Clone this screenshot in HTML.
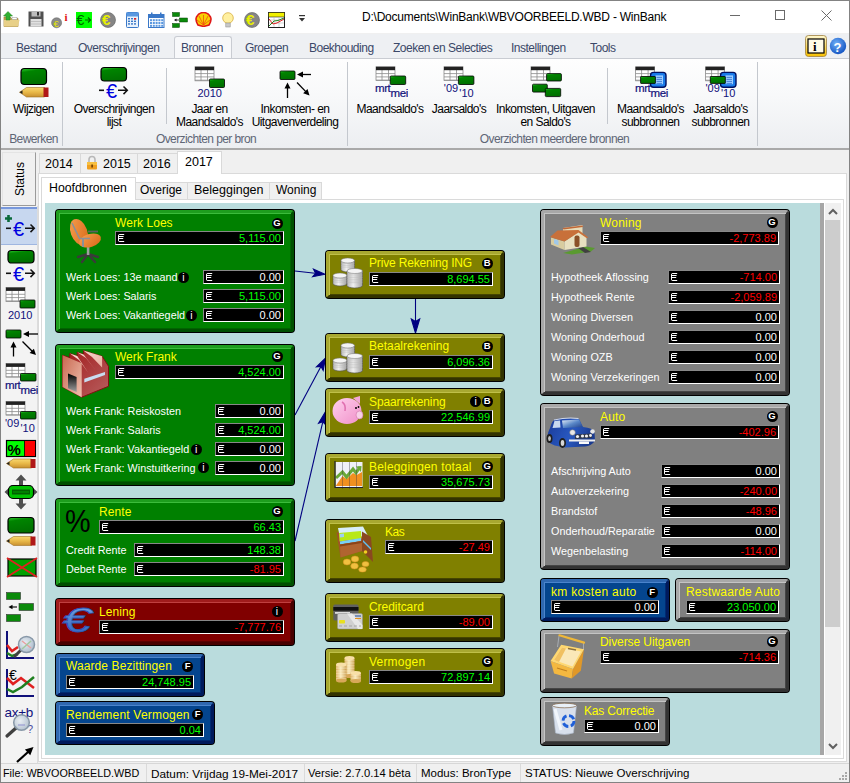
<!DOCTYPE html>
<html><head><meta charset="utf-8"><style>
*{box-sizing:border-box;margin:0;padding:0}
html,body{width:850px;height:783px;overflow:hidden;background:#f0f0f0;font-family:"Liberation Sans",sans-serif}
.a{position:absolute}
#frame{position:absolute;left:0;top:0;width:850px;height:783px;border:1px solid #838383}
.bx{position:absolute;background:#000;border-radius:4px;padding:1px}
.bi{width:100%;height:100%;border-style:solid;border-width:3px;border-radius:3px;position:relative}
.g .bi{background:#008000;border-color:#1e9e1e #005000 #005000 #1e9e1e;box-shadow:inset 1px 1px 0 #3cbc3c,inset -1px -1px 0 #006400}
.o .bi{background:#808000;border-color:#a8a830 #333300 #333300 #a8a830;box-shadow:inset 1px 1px 0 #c0c048,inset -1px -1px 0 #454500}
.y .bi{background:#808080;border-color:#a8a8a8 #333 #333 #a8a8a8;box-shadow:inset 1px 1px 0 #c4c4c4,inset -1px -1px 0 #454545}
.b .bi{background:#04458e;border-color:#2f68b0 #001a5c #001a5c #2f68b0;box-shadow:inset 1px 1px 0 #4a84cc,inset -1px -1px 0 #002a72}
.r .bi{background:#800000;border-color:#a01c1c #480000 #480000 #a01c1c;box-shadow:inset 1px 1px 0 #c04040,inset -1px -1px 0 #5a0000}
.tt{position:absolute;font-size:12px;line-height:14px;color:#ffff00;white-space:nowrap}
.lb{position:absolute;font-size:10.8px;line-height:13px;color:#fff;white-space:nowrap}
.y .lb{color:#ececec;letter-spacing:0.1px}
.vf{position:absolute;height:14px;background:#000;border-style:solid;border-width:1px;border-color:#888 #fff #fff #888;font-size:11px;line-height:12px;color:#fff;white-space:nowrap}
.vf .eu{position:absolute;left:0;top:0}
.vf b{font-weight:normal;position:absolute;right:2px;top:0}
.gr{color:#00ff00!important}.rd{color:#ff0000!important}
.bd{position:absolute;width:11px;height:11px;border-radius:50%;background:#000;color:#fff;font-size:9.5px;font-weight:bold;text-align:center;line-height:10.6px;font-family:"Liberation Sans",sans-serif}
.rt{position:absolute;top:41.3px;font-size:12px;letter-spacing:-0.5px;color:#3b4868;white-space:nowrap}
.rl{position:absolute;font-size:12px;letter-spacing:-0.55px;line-height:13px;color:#000;text-align:center;white-space:nowrap}
.grp{position:absolute;top:132px;font-size:12px;letter-spacing:-0.6px;color:#5e6676;white-space:nowrap}
.st{position:absolute;top:767px;font-size:11.5px;color:#000;white-space:nowrap}
.sd{position:absolute;top:764px;width:1px;height:18px;background:#dadada}
</style></head><body>
<svg width="0" height="0" style="position:absolute"><symbol id="eur" viewBox="0 0 10 12"><path d="M3.2 2.5H8.2M2.5 3.2V8.8M3.2 9.5H8.2M2.8 4.5H7.6M2.8 6.5H7.2" stroke="#fff" stroke-width="1" fill="none"/><path d="M3.5 2.5Q2.5 2.5 2.5 3.5M2.5 8.5Q2.5 9.5 3.5 9.5" stroke="#fff" stroke-width="1" fill="none"/></symbol></svg>
<div class="a" style="left:0;top:0;width:850px;height:33px;background:#fff"></div>
<div class="a" style="left:362px;top:9.8px;font-size:12px;letter-spacing:-0.23px;color:#000;white-space:nowrap">D:\Documents\WinBank\WBVOORBEELD.WBD - WinBank</div>
<div class="a" style="left:730px;top:15px;width:10px;height:1px;background:#6a6a6a"></div>
<div class="a" style="left:775px;top:10px;width:10px;height:10px;border:1px solid #6a6a6a"></div>
<svg class="a" style="left:820.5px;top:10px" width="11" height="11"><path d="M0.5 0.5L10.5 10.5M10.5 0.5L0.5 10.5" stroke="#6a6a6a" stroke-width="1"/></svg>
<div class="a" style="left:0;top:34px;width:850px;height:24px;background:#eef0f3"></div>
<div class="a" style="left:174px;top:36px;width:58px;height:23px;background:#f7f8fa;border:1px solid #c9ccd2;border-bottom:none;border-radius:3px 3px 0 0"></div>
<div class="rt" style="left:16px">Bestand</div>
<div class="rt" style="left:78px">Overschrijvingen</div>
<div class="rt" style="left:181px">Bronnen</div>
<div class="rt" style="left:245px">Groepen</div>
<div class="rt" style="left:309px">Boekhouding</div>
<div class="rt" style="left:393px">Zoeken en Selecties</div>
<div class="rt" style="left:511px">Instellingen</div>
<div class="rt" style="left:590px">Tools</div>
<div class="a" style="left:0;top:58px;width:850px;height:91px;background:linear-gradient(#fefefe,#f8f9fa 40%,#eceef1);border-top:1px solid #c9ccd2"></div>
<div class="a" style="left:0;top:148px;width:850px;height:2px;background:#a9a9a9"></div>
<div class="a" style="left:62px;top:62px;width:1px;height:84px;background:#c4c8ce"></div>
<div class="a" style="left:347px;top:62px;width:1px;height:84px;background:#c4c8ce"></div>
<div class="a" style="left:757px;top:62px;width:1px;height:84px;background:#c4c8ce"></div>
<div class="a" style="left:166px;top:68px;width:1px;height:56px;background:#c4c8ce"></div>
<div class="a" style="left:607px;top:68px;width:1px;height:56px;background:#c4c8ce"></div>
<div class="rl" style="left:-66.5px;width:200px;top:103px">Wijzigen</div>
<div class="rl" style="left:14px;width:200px;top:103px">Overschrijvingen</div>
<div class="rl" style="left:14px;width:200px;top:116px">lijst</div>
<div class="rl" style="left:109.5px;width:200px;top:103px">Jaar en</div>
<div class="rl" style="left:109.5px;width:200px;top:116px">Maandsaldo's</div>
<div class="rl" style="left:195px;width:200px;top:103px">Inkomsten- en</div>
<div class="rl" style="left:195px;width:200px;top:116px">Uitgavenverdeling</div>
<div class="rl" style="left:290px;width:200px;top:103px">Maandsaldo's</div>
<div class="rl" style="left:359px;width:200px;top:103px">Jaarsaldo's</div>
<div class="rl" style="left:445.5px;width:200px;top:103px">Inkomsten, Uitgaven</div>
<div class="rl" style="left:445.5px;width:200px;top:116px">en Saldo's</div>
<div class="rl" style="left:550.5px;width:200px;top:103px">Maandsaldo's</div>
<div class="rl" style="left:550.5px;width:200px;top:116px">subbronnen</div>
<div class="rl" style="left:620.5px;width:200px;top:103px">Jaarsaldo's</div>
<div class="rl" style="left:620.5px;width:200px;top:116px">subbronnen</div>
<div class="grp" style="left:-66.5px;width:200px;text-align:center">Bewerken</div>
<div class="grp" style="left:106px;width:200px;text-align:center">Overzichten per bron</div>
<div class="grp" style="left:454.5px;width:200px;text-align:center">Overzichten meerdere bronnen</div>
<div class="a" style="left:2px;top:152px;width:34px;height:54px;background:#f0f0f0;border:1px solid #e4e4e4;border-right:1px solid #9a9a9a;border-bottom:1px solid #9a9a9a"></div>
<div class="a" style="left:0px;top:172px;width:40px;text-align:center;font-size:12px;color:#000;transform:rotate(-90deg);white-space:nowrap">Status</div>
<div class="a" style="left:1px;top:206px;width:37px;height:557px;background:#f3f3f3;border-right:1px solid #dcdcdc"></div>
<div class="a" style="left:1px;top:207px;width:36px;height:38px;background:#c7d7ef;border-top:2px solid #7898dc;border-bottom:1px solid #9fb6e0"></div>
<div class="a" style="left:38px;top:173px;width:809px;height:589px;background:#fff;border:1px solid #dadada"></div>
<div class="a" style="left:39px;top:153px;width:42px;height:21px;background:#f0f0f0;border:1px solid #d9d9d9"></div>
<div class="a" style="left:80px;top:153px;width:58px;height:21px;background:#f0f0f0;border:1px solid #d9d9d9"></div>
<div class="a" style="left:137px;top:153px;width:42px;height:21px;background:#f0f0f0;border:1px solid #d9d9d9"></div>
<div class="a" style="left:177px;top:151px;width:45px;height:23px;background:#fff;border:1px solid #d9d9d9;border-bottom:none"></div>
<div class="a" style="left:45px;top:157px;font-size:12.5px;color:#000;white-space:nowrap">2014</div>
<div class="a" style="left:103px;top:157px;font-size:12.5px;color:#000;white-space:nowrap">2015</div>
<div class="a" style="left:143px;top:157px;font-size:12.5px;color:#000;white-space:nowrap">2016</div>
<div class="a" style="left:185px;top:155px;font-size:12.5px;color:#000;white-space:nowrap">2017</div>
<svg class="a" style="left:86px;top:155px" width="12" height="15"><path d="M3 7V4.5a3 3 0 0 1 6 0V7" fill="none" stroke="#b8b8b8" stroke-width="1.6"/><rect x="1" y="7" width="10" height="7.5" rx="1" fill="#f0a020"/><rect x="1" y="7" width="10" height="3" fill="#f8c040"/><rect x="5.4" y="9.5" width="1.4" height="3" fill="#5a3000"/></svg>
<div class="a" style="left:41px;top:199px;width:803px;height:560px;background:#fff;border:1px solid #dadada"></div>
<div class="a" style="left:135px;top:182px;width:187px;height:18px;background:#f0f0f0;border:1px solid #d9d9d9"></div>
<div class="a" style="left:187px;top:182px;width:1px;height:18px;background:#d9d9d9"></div>
<div class="a" style="left:269px;top:182px;width:1px;height:18px;background:#d9d9d9"></div>
<div class="a" style="left:41px;top:177px;width:95px;height:23px;background:#fff;border:1px solid #d9d9d9;border-bottom:none"></div>
<div class="a" style="left:49px;top:181px;font-size:12.3px;color:#000;white-space:nowrap">Hoofdbronnen</div>
<div class="a" style="left:140px;top:183px;font-size:12px;color:#000;white-space:nowrap">Overige</div>
<div class="a" style="left:194px;top:183px;font-size:12.5px;color:#000;white-space:nowrap">Beleggingen</div>
<div class="a" style="left:276px;top:183px;font-size:12px;color:#000;white-space:nowrap">Woning</div>
<div class="a" style="left:45px;top:203px;width:775px;height:552px;background:#badcdd"></div>
<div class="a" style="left:820px;top:203px;width:4px;height:552px;background:#a6a6a6"></div>
<div class="a" style="left:825px;top:203px;width:16px;height:552px;background:#f0f0f0"></div>
<div class="a" style="left:825px;top:220px;width:15px;height:407px;background:#cdcdcd"></div>
<svg class="a" style="left:827px;top:207px" width="12" height="9"><path d="M2 7L6 3L10 7" fill="none" stroke="#606060" stroke-width="2"/></svg>
<svg class="a" style="left:827px;top:742px" width="12" height="9"><path d="M2 2L6 6L10 2" fill="none" stroke="#606060" stroke-width="2"/></svg>
<div class="a" style="left:0;top:763px;width:850px;height:20px;background:#f0f0f0;border-top:1px solid #d7d7d7"></div>
<div class="st" style="left:3px;font-size:10.8px">File: WBVOORBEELD.WBD</div>
<div class="st" style="left:151px;font-size:11.8px">Datum: Vrijdag 19-Mei-2017</div>
<div class="st" style="left:308px;font-size:11.2px">Versie: 2.7.0.14 bèta</div>
<div class="st" style="left:421px;font-size:11.5px">Modus: BronType</div>
<div class="st" style="left:525px;font-size:11.5px">STATUS: Nieuwe Overschrijving</div>
<div class="sd" style="left:146px"></div>
<div class="sd" style="left:304px"></div>
<div class="sd" style="left:416px"></div>
<div class="sd" style="left:520px"></div>
<svg class="a" style="left:0;top:0" width="850" height="783"><g stroke="#000080" stroke-width="1.1" fill="#000080"><line x1="295" y1="271" x2="315.06" y2="273.21"/><path d="M325.00 274.30L312.66 276.77L315.56 273.26L313.49 269.21Z"/><line x1="415.5" y1="299" x2="415.50" y2="321.00"/><path d="M415.50 333.00L411.30 319.00L415.50 321.50L419.70 319.00Z"/><line x1="295" y1="415" x2="320.78" y2="366.82"/><path d="M325.50 358.00L323.19 370.37L321.02 366.38L316.49 366.79Z"/><line x1="295" y1="541" x2="322.73" y2="422.24"/><path d="M325.00 412.50L325.97 425.05L322.84 421.75L318.57 423.32Z"/></g></svg>
<div class="bx g" style="left:55px;top:209px;width:240px;height:124px"><div class="bi"></div></div>
<div class="tt" style="left:115px;top:215.8px;letter-spacing:0.06px">Werk Loes</div>
<div class="bd" style="left:271.5px;top:217.5px;">G</div>
<div class="vf" style="left:115px;top:231px;width:169px;height:14px"><svg class="eu" width="10" height="12"><use href="#eur"/></svg><b class="gr">5,115.00</b></div>
<div class="lb" style="left:66px;top:270.6px;">Werk Loes: 13e maand</div>
<div class="vf" style="left:203px;top:270px;width:81px;height:14px"><svg class="eu" width="10" height="12"><use href="#eur"/></svg><b>0.00</b></div>
<div class="lb" style="left:66px;top:289.6px;">Werk Loes: Salaris</div>
<div class="vf" style="left:203px;top:289px;width:81px;height:14px"><svg class="eu" width="10" height="12"><use href="#eur"/></svg><b class="gr">5,115.00</b></div>
<div class="lb" style="left:66px;top:308.6px;">Werk Loes: Vakantiegeld</div>
<div class="vf" style="left:203px;top:308px;width:81px;height:14px"><svg class="eu" width="10" height="12"><use href="#eur"/></svg><b>0.00</b></div>
<div class="bd" style="left:178.0px;top:271.5px;font-weight:normal;font-size:10.5px;line-height:10.5px;">i</div>
<div class="bd" style="left:186.0px;top:309.5px;font-weight:normal;font-size:10.5px;line-height:10.5px;">i</div>
<div class="bx g" style="left:55px;top:344px;width:240px;height:142px"><div class="bi"></div></div>
<div class="tt" style="left:115px;top:349.8px;letter-spacing:0px">Werk Frank</div>
<div class="bd" style="left:271.5px;top:351.2px;">G</div>
<div class="vf" style="left:115px;top:365px;width:169px;height:14px"><svg class="eu" width="10" height="12"><use href="#eur"/></svg><b class="gr">4,524.00</b></div>
<div class="lb" style="left:66px;top:404.6px;">Werk Frank: Reiskosten</div>
<div class="vf" style="left:215px;top:404px;width:69px;height:14px"><svg class="eu" width="10" height="12"><use href="#eur"/></svg><b>0.00</b></div>
<div class="lb" style="left:66px;top:423.6px;">Werk Frank: Salaris</div>
<div class="vf" style="left:215px;top:423px;width:69px;height:14px"><svg class="eu" width="10" height="12"><use href="#eur"/></svg><b class="gr">4,524.00</b></div>
<div class="lb" style="left:66px;top:442.6px;">Werk Frank: Vakantiegeld</div>
<div class="vf" style="left:215px;top:442px;width:69px;height:14px"><svg class="eu" width="10" height="12"><use href="#eur"/></svg><b>0.00</b></div>
<div class="lb" style="left:66px;top:461.6px;">Werk Frank: Winstuitkering</div>
<div class="vf" style="left:215px;top:461px;width:69px;height:14px"><svg class="eu" width="10" height="12"><use href="#eur"/></svg><b>0.00</b></div>
<div class="bd" style="left:190.7px;top:443.5px;font-weight:normal;font-size:10.5px;line-height:10.5px;">i</div>
<div class="bd" style="left:198.0px;top:462.2px;font-weight:normal;font-size:10.5px;line-height:10.5px;">i</div>
<div class="bx g" style="left:55px;top:498px;width:240px;height:89px"><div class="bi"></div></div>
<div class="tt" style="left:99px;top:504.8px;letter-spacing:0.1px">Rente</div>
<div class="bd" style="left:271.5px;top:505.9px;">G</div>
<div class="vf" style="left:99px;top:520px;width:185px;height:14px"><svg class="eu" width="10" height="12"><use href="#eur"/></svg><b class="gr">66.43</b></div>
<div class="lb" style="left:66px;top:543.6px;">Credit Rente</div>
<div class="vf" style="left:134px;top:543px;width:150px;height:14px"><svg class="eu" width="10" height="12"><use href="#eur"/></svg><b class="gr">148.38</b></div>
<div class="lb" style="left:66px;top:562.6px;">Debet Rente</div>
<div class="vf" style="left:134px;top:562px;width:150px;height:14px"><svg class="eu" width="10" height="12"><use href="#eur"/></svg><b class="rd">-81.95</b></div>
<div class="bx r" style="left:55px;top:598px;width:240px;height:48px"><div class="bi"></div></div>
<div class="tt" style="left:99px;top:604.8px;letter-spacing:0.1px">Lening</div>
<div class="bd" style="left:271.5px;top:606.2px;font-weight:normal;font-size:10.5px;line-height:10.5px;">i</div>
<div class="vf" style="left:99px;top:620px;width:185px;height:14px"><svg class="eu" width="10" height="12"><use href="#eur"/></svg><b class="rd">-7,777.76</b></div>
<div class="bx b" style="left:55px;top:653px;width:150px;height:44px"><div class="bi"></div></div>
<div class="tt" style="left:66px;top:658.8px;letter-spacing:0.09px">Waarde Bezittingen</div>
<div class="bd" style="left:182.2px;top:661.1px;">F</div>
<div class="vf" style="left:66px;top:675px;width:128px;height:14px"><svg class="eu" width="10" height="12"><use href="#eur"/></svg><b class="gr">24,748.95</b></div>
<div class="bx b" style="left:55px;top:701px;width:160px;height:44px"><div class="bi"></div></div>
<div class="tt" style="left:66px;top:707.8px;letter-spacing:0.2px">Rendement Vermogen</div>
<div class="bd" style="left:192.1px;top:708.7px;">F</div>
<div class="vf" style="left:66px;top:723px;width:138px;height:14px"><svg class="eu" width="10" height="12"><use href="#eur"/></svg><b class="gr">0.04</b></div>
<div class="bx o" style="left:325px;top:250px;width:180px;height:49px"><div class="bi"></div></div>
<div class="tt" style="left:369px;top:255.8px;letter-spacing:-0.17px">Prive Rekening ING</div>
<div class="bd" style="left:481.8px;top:258.2px;">B</div>
<div class="vf" style="left:369px;top:272px;width:124px;height:14px"><svg class="eu" width="10" height="12"><use href="#eur"/></svg><b class="gr">8,694.55</b></div>
<div class="bx o" style="left:325px;top:333px;width:180px;height:49px"><div class="bi"></div></div>
<div class="tt" style="left:369px;top:338.8px;letter-spacing:0px">Betaalrekening</div>
<div class="bd" style="left:481.8px;top:341.1px;">B</div>
<div class="vf" style="left:369px;top:355px;width:124px;height:14px"><svg class="eu" width="10" height="12"><use href="#eur"/></svg><b class="gr">6,096.36</b></div>
<div class="bx o" style="left:325px;top:388px;width:180px;height:49px"><div class="bi"></div></div>
<div class="tt" style="left:369px;top:394.8px;letter-spacing:-0.12px">Spaarrekening</div>
<div class="bd" style="left:481.8px;top:396.4px;">B</div>
<div class="vf" style="left:369px;top:410px;width:124px;height:14px"><svg class="eu" width="10" height="12"><use href="#eur"/></svg><b class="gr">22,546.99</b></div>
<div class="bx o" style="left:325px;top:453px;width:180px;height:49px"><div class="bi"></div></div>
<div class="tt" style="left:369px;top:459.8px;letter-spacing:0.18px">Beleggingen totaal</div>
<div class="bd" style="left:481.8px;top:461.3px;">G</div>
<div class="vf" style="left:369px;top:475px;width:124px;height:14px"><svg class="eu" width="10" height="12"><use href="#eur"/></svg><b class="gr">35,675.73</b></div>
<div class="bx o" style="left:325px;top:519px;width:180px;height:64px"><div class="bi"></div></div>
<div class="tt" style="left:385px;top:524.8px;letter-spacing:-0.5px">Kas</div>
<div class="vf" style="left:385px;top:540px;width:108px;height:14px"><svg class="eu" width="10" height="12"><use href="#eur"/></svg><b class="rd">-27.49</b></div>
<div class="bx o" style="left:325px;top:593px;width:180px;height:49px"><div class="bi"></div></div>
<div class="tt" style="left:369px;top:599.8px;letter-spacing:-0.06px">Creditcard</div>
<div class="vf" style="left:369px;top:615px;width:124px;height:14px"><svg class="eu" width="10" height="12"><use href="#eur"/></svg><b class="rd">-89.00</b></div>
<div class="bx o" style="left:325px;top:648px;width:180px;height:49px"><div class="bi"></div></div>
<div class="tt" style="left:369px;top:654.8px;letter-spacing:0.2px">Vermogen</div>
<div class="bd" style="left:481.8px;top:656.2px;">G</div>
<div class="vf" style="left:369px;top:670px;width:124px;height:14px"><svg class="eu" width="10" height="12"><use href="#eur"/></svg><b class="gr">72,897.14</b></div>
<div class="bd" style="left:470.1px;top:396.4px;font-weight:normal;font-size:10.5px;line-height:10.5px;">i</div>
<div class="bx y" style="left:540px;top:209px;width:250px;height:187px"><div class="bi"></div></div>
<div class="tt" style="left:600px;top:215.8px;letter-spacing:0.2px">Woning</div>
<div class="bd" style="left:766.5px;top:216.9px;">G</div>
<div class="vf" style="left:600px;top:231px;width:179px;height:14px"><svg class="eu" width="10" height="12"><use href="#eur"/></svg><b class="rd">-2,773.89</b></div>
<div class="lb" style="left:551px;top:270.6px;">Hypotheek Aflossing</div>
<div class="vf" style="left:668px;top:270px;width:112px;height:14px"><svg class="eu" width="10" height="12"><use href="#eur"/></svg><b class="rd">-714.00</b></div>
<div class="lb" style="left:551px;top:290.6px;">Hypotheek Rente</div>
<div class="vf" style="left:668px;top:290px;width:112px;height:14px"><svg class="eu" width="10" height="12"><use href="#eur"/></svg><b class="rd">-2,059.89</b></div>
<div class="lb" style="left:551px;top:310.6px;">Woning Diversen</div>
<div class="vf" style="left:668px;top:310px;width:112px;height:14px"><svg class="eu" width="10" height="12"><use href="#eur"/></svg><b>0.00</b></div>
<div class="lb" style="left:551px;top:330.6px;">Woning Onderhoud</div>
<div class="vf" style="left:668px;top:330px;width:112px;height:14px"><svg class="eu" width="10" height="12"><use href="#eur"/></svg><b>0.00</b></div>
<div class="lb" style="left:551px;top:350.6px;">Woning OZB</div>
<div class="vf" style="left:668px;top:350px;width:112px;height:14px"><svg class="eu" width="10" height="12"><use href="#eur"/></svg><b>0.00</b></div>
<div class="lb" style="left:551px;top:370.6px;">Woning Verzekeringen</div>
<div class="vf" style="left:668px;top:370px;width:112px;height:14px"><svg class="eu" width="10" height="12"><use href="#eur"/></svg><b>0.00</b></div>
<div class="bx y" style="left:540px;top:403px;width:250px;height:167px"><div class="bi"></div></div>
<div class="tt" style="left:600px;top:409.8px;letter-spacing:0.15px">Auto</div>
<div class="bd" style="left:766.5px;top:410.7px;">G</div>
<div class="vf" style="left:600px;top:425px;width:179px;height:14px"><svg class="eu" width="10" height="12"><use href="#eur"/></svg><b class="rd">-402.96</b></div>
<div class="lb" style="left:551px;top:464.6px;">Afschrijving Auto</div>
<div class="vf" style="left:661px;top:464px;width:119px;height:14px"><svg class="eu" width="10" height="12"><use href="#eur"/></svg><b>0.00</b></div>
<div class="lb" style="left:551px;top:484.6px;">Autoverzekering</div>
<div class="vf" style="left:661px;top:484px;width:119px;height:14px"><svg class="eu" width="10" height="12"><use href="#eur"/></svg><b class="rd">-240.00</b></div>
<div class="lb" style="left:551px;top:504.6px;">Brandstof</div>
<div class="vf" style="left:661px;top:504px;width:119px;height:14px"><svg class="eu" width="10" height="12"><use href="#eur"/></svg><b class="rd">-48.96</b></div>
<div class="lb" style="left:551px;top:524.6px;">Onderhoud/Reparatie</div>
<div class="vf" style="left:661px;top:524px;width:119px;height:14px"><svg class="eu" width="10" height="12"><use href="#eur"/></svg><b>0.00</b></div>
<div class="lb" style="left:551px;top:544.6px;">Wegenbelasting</div>
<div class="vf" style="left:661px;top:544px;width:119px;height:14px"><svg class="eu" width="10" height="12"><use href="#eur"/></svg><b class="rd">-114.00</b></div>
<div class="bx b" style="left:540px;top:578px;width:130px;height:44px"><div class="bi"></div></div>
<div class="tt" style="left:551px;top:584.8px;letter-spacing:0.3px">km kosten auto</div>
<div class="bd" style="left:646.7px;top:586.5px;">F</div>
<div class="vf" style="left:551px;top:600px;width:108px;height:14px"><svg class="eu" width="10" height="12"><use href="#eur"/></svg><b>0.00</b></div>
<div class="bx y" style="left:675px;top:578px;width:115px;height:44px"><div class="bi"></div></div>
<div class="tt" style="left:686px;top:584.8px;letter-spacing:0.19px">Restwaarde Auto</div>
<div class="vf" style="left:686px;top:600px;width:93px;height:14px"><svg class="eu" width="10" height="12"><use href="#eur"/></svg><b class="gr">23,050.00</b></div>
<div class="bx y" style="left:540px;top:629px;width:250px;height:64px"><div class="bi"></div></div>
<div class="tt" style="left:600px;top:634.8px;letter-spacing:-0.08px">Diverse Uitgaven</div>
<div class="bd" style="left:766.5px;top:636.3px;">G</div>
<div class="vf" style="left:600px;top:650px;width:179px;height:14px"><svg class="eu" width="10" height="12"><use href="#eur"/></svg><b class="rd">-714.36</b></div>
<div class="bx y" style="left:540px;top:697px;width:130px;height:49px"><div class="bi"></div></div>
<div class="tt" style="left:584px;top:703.8px;letter-spacing:-0.18px">Kas Correctie</div>
<div class="vf" style="left:584px;top:719px;width:75px;height:14px"><svg class="eu" width="10" height="12"><use href="#eur"/></svg><b>0.00</b></div>
<div class="a" style="left:845px;top:772px;width:2px;height:2px;background:#a8a8a8"></div>
<div class="a" style="left:842px;top:775px;width:2px;height:2px;background:#a8a8a8"></div>
<div class="a" style="left:845px;top:775px;width:2px;height:2px;background:#a8a8a8"></div>
<div class="a" style="left:839px;top:778px;width:2px;height:2px;background:#a8a8a8"></div>
<div class="a" style="left:842px;top:778px;width:2px;height:2px;background:#a8a8a8"></div>
<div class="a" style="left:845px;top:778px;width:2px;height:2px;background:#a8a8a8"></div>
<svg class="a" style="left:0;top:0" width="0" height="0"><defs>
<linearGradient id="gg" x1="0" y1="0" x2="0.25" y2="1"><stop offset="0" stop-color="#30d030"/><stop offset="0.25" stop-color="#008400"/><stop offset="1" stop-color="#007000"/></linearGradient>
<linearGradient id="pen" x1="0" y1="0" x2="0" y2="1"><stop offset="0" stop-color="#f8d870"/><stop offset="0.5" stop-color="#e8b848"/><stop offset="1" stop-color="#c89030"/></linearGradient>
<linearGradient id="orng" x1="0" y1="0" x2="1" y2="1"><stop offset="0" stop-color="#f8a050"/><stop offset="1" stop-color="#d86818"/></linearGradient>
<linearGradient id="silv" x1="0" y1="0" x2="1" y2="0"><stop offset="0" stop-color="#b8b8b8"/><stop offset="0.4" stop-color="#f0f0f0"/><stop offset="1" stop-color="#a0a0a0"/></linearGradient>
<linearGradient id="gold" x1="0" y1="0" x2="1" y2="0"><stop offset="0" stop-color="#d8a858"/><stop offset="0.45" stop-color="#fae8b8"/><stop offset="1" stop-color="#c89848"/></linearGradient>
<linearGradient id="eub" x1="0" y1="0" x2="0" y2="1"><stop offset="0" stop-color="#7fb0ea"/><stop offset="1" stop-color="#2858b8"/></linearGradient>
<linearGradient id="pink" x1="0" y1="0" x2="1" y2="1"><stop offset="0" stop-color="#ffd0ee"/><stop offset="1" stop-color="#f090c8"/></linearGradient>
<linearGradient id="fac" x1="0" y1="0" x2="1" y2="1"><stop offset="0" stop-color="#c86850"/><stop offset="1" stop-color="#f0c0b0"/></linearGradient>
<linearGradient id="bsk" x1="0" y1="0" x2="0" y2="1"><stop offset="0" stop-color="#ffe090"/><stop offset="1" stop-color="#f0a820"/></linearGradient>
</defs></svg>
<svg class="a" style="left:3px;top:11px;" width="18" height="17" viewBox="0 0 18 17"><path d="M1 6 H7 L8.5 7.5 H15 V15.5 H1 Z" fill="#c8a850" stroke="#a08030" stroke-width="0.7"/><path d="M1 9 H16.5 L15 15.5 H1 Z" fill="#e8d088"/><rect x="9" y="6.5" width="5" height="2" fill="#fff" stroke="#999" stroke-width="0.5"/><path d="M5 0.5 L9.5 5 H7 V9 H3 V5 H0.5 Z" fill="#30b030" stroke="#208020" stroke-width="0.5"/></svg>
<svg class="a" style="left:28px;top:11px;" width="16" height="16" viewBox="0 0 16 16"><path d="M0.5 0.5H15.5V15.5H0.5Z" fill="#505050"/><rect x="3.5" y="0.5" width="9" height="5" fill="#bdbdbd"/><rect x="9" y="1" width="2" height="3.5" fill="#333"/><rect x="2.5" y="8" width="11" height="7.5" fill="#e0e0e0"/><line x1="3" y1="10.5" x2="13" y2="10.5" stroke="#aaa" stroke-width="0.6"/><line x1="3" y1="13" x2="13" y2="13" stroke="#aaa" stroke-width="0.6"/></svg>
<svg class="a" style="left:51px;top:12px;" width="19" height="17" viewBox="0 0 19 17"><circle cx="5.6" cy="10.8" r="5" fill="#8a8a8a" stroke="#6a6a6a" stroke-width="0.6"/><text x="2.4" y="14.5" font-family="Liberation Sans" font-size="9.5" fill="#e8e800">€</text><text x="13.5" y="9" font-family="Liberation Serif" font-weight="bold" font-size="11" fill="#e01010">i</text></svg>
<svg class="a" style="left:76px;top:12px;" width="16" height="16" viewBox="0 0 16 16"><rect x="0" y="0" width="16" height="16" fill="#00ff00"/><text x="0.5" y="13.3" font-family="Liberation Sans" font-size="14" fill="#006000">€</text><path d="M9 8H14.5M12 5.5L14.5 8L12 10.5" fill="none" stroke="#006000" stroke-width="1.2"/></svg>
<svg class="a" style="left:100px;top:11.5px;" width="17" height="16" viewBox="0 0 17 16"><circle cx="8.0" cy="8.0" r="7.5" fill="#858585" stroke="#606060" stroke-width="0.6"/><text x="1.92" y="13.28" font-family="Liberation Sans" font-weight="bold" font-size="15.2" fill="#e8f000">€</text></svg>
<svg class="a" style="left:126px;top:12px;" width="13" height="16" viewBox="0 0 13 16"><rect x="0.5" y="0.5" width="12" height="15" rx="1" fill="#e8f2fc" stroke="#3a78c8" stroke-width="1"/><rect x="0.5" y="0.5" width="12" height="4" fill="#5a98e0"/><rect x="2" y="6.0" width="2" height="1.4" fill="#3a78c8"/><rect x="2" y="8.6" width="2" height="1.4" fill="#3a78c8"/><rect x="2" y="11.2" width="2" height="1.4" fill="#3a78c8"/><rect x="5" y="6.0" width="2" height="1.4" fill="#3a78c8"/><rect x="5" y="8.6" width="2" height="1.4" fill="#3a78c8"/><rect x="5" y="11.2" width="2" height="1.4" fill="#3a78c8"/><rect x="8" y="6.0" width="2" height="1.4" fill="#3a78c8"/><rect x="8" y="8.6" width="2" height="1.4" fill="#3a78c8"/><rect x="8" y="11.2" width="2" height="1.4" fill="#3a78c8"/><rect x="8" y="6" width="2.2" height="1.6" fill="#e02020"/></svg>
<svg class="a" style="left:148px;top:12px;" width="17" height="16" viewBox="0 0 17 16"><rect x="0.5" y="2.5" width="15.5" height="13" fill="#fff" stroke="#3a78c8" stroke-width="1"/><rect x="0.5" y="2.5" width="15.5" height="3.5" fill="#3a78c8"/><rect x="2.0" y="7.2" width="2" height="2" fill="#5a98e0"/><rect x="2.0" y="10.0" width="2" height="2" fill="#5a98e0"/><rect x="2.0" y="12.8" width="2" height="2" fill="#5a98e0"/><rect x="4.8" y="7.2" width="2" height="2" fill="#5a98e0"/><rect x="4.8" y="10.0" width="2" height="2" fill="#5a98e0"/><rect x="4.8" y="12.8" width="2" height="2" fill="#5a98e0"/><rect x="7.6" y="7.2" width="2" height="2" fill="#5a98e0"/><rect x="7.6" y="10.0" width="2" height="2" fill="#5a98e0"/><rect x="7.6" y="12.8" width="2" height="2" fill="#5a98e0"/><rect x="10.4" y="7.2" width="2" height="2" fill="#5a98e0"/><rect x="10.4" y="10.0" width="2" height="2" fill="#5a98e0"/><rect x="10.4" y="12.8" width="2" height="2" fill="#5a98e0"/><rect x="13.2" y="7.2" width="2" height="2" fill="#5a98e0"/><rect x="13.2" y="10.0" width="2" height="2" fill="#5a98e0"/><rect x="13.2" y="12.8" width="2" height="2" fill="#5a98e0"/><rect x="3" y="0.5" width="1.5" height="4" fill="#3a78c8"/><rect x="12" y="0.5" width="1.5" height="4" fill="#3a78c8"/></svg>
<svg class="a" style="left:172px;top:12px;" width="16" height="16" viewBox="0 0 16 16"><rect x="0.5" y="0.5" width="7" height="4" fill="#0a8a0a" stroke="#064006" stroke-width="0.5"/><rect x="7.5" y="6" width="8" height="4" fill="#0a8a0a" stroke="#064006" stroke-width="0.5"/><rect x="0.5" y="11.5" width="7" height="4" fill="#0a8a0a" stroke="#064006" stroke-width="0.5"/><line x1="7" y1="8" x2="3.50" y2="8.00" stroke="#111" stroke-width="0.8"/><path d="M2.00 8.00L4.50 6.40L4.50 9.60Z" fill="#111"/></svg>
<svg class="a" style="left:195px;top:12px;" width="17" height="15" viewBox="0 0 17 15"><path d="M8.5 14.5 L3 13 Q0 8 1.5 5 Q4 0.5 8.5 0.5 Q13 0.5 15.5 5 Q17 8 14 13 Z" fill="#f8d000" stroke="#e01818" stroke-width="1.6"/><path d="M8.5 13V3M8.5 13L4 4M8.5 13L13 4M8.5 13L2 8M8.5 13L15 8" stroke="#f05010" stroke-width="0.8"/></svg>
<svg class="a" style="left:222px;top:12px;" width="12" height="16" viewBox="0 0 12 16"><circle cx="6" cy="6" r="5.3" fill="#fff0a0" stroke="#d8b040" stroke-width="0.8"/><rect x="3.8" y="11" width="4.4" height="4" fill="#c8c8c8" stroke="#888" stroke-width="0.5"/></svg>
<svg class="a" style="left:244px;top:11.5px;" width="17" height="16" viewBox="0 0 17 16"><circle cx="8.0" cy="8.0" r="7.5" fill="#858585" stroke="#606060" stroke-width="0.6"/><text x="1.92" y="13.28" font-family="Liberation Sans" font-weight="bold" font-size="15.2" fill="#e8f000">€</text></svg>
<svg class="a" style="left:268px;top:12px;" width="17" height="16" viewBox="0 0 17 16"><rect x="0.5" y="0.5" width="16" height="15" fill="#fff" stroke="#222" stroke-width="1"/><rect x="0.5" y="0.5" width="16" height="4.5" fill="#f0f000" stroke="#222" stroke-width="0.6"/><path d="M1 8H16M1 11H16M6 5V15M11 5V15" stroke="#bbb" stroke-width="0.6"/><path d="M1 7L5 12L9 11L16 7" fill="none" stroke="#e02020" stroke-width="1"/><path d="M1 14L6 9L10 8.5L16 6" fill="none" stroke="#208020" stroke-width="1"/></svg>
<svg class="a" style="left:299px;top:15px;" width="7" height="8" viewBox="0 0 7 8"><rect x="0" y="0" width="6" height="1.2" fill="#333"/><path d="M0 3H6L3 6.5Z" fill="#333"/></svg>
<svg class="a" style="left:18px;top:66px;" width="32" height="32" viewBox="0 0 32 32"><rect x="3" y="2.5" width="25.5" height="16" rx="3.5" fill="url(#gg)" stroke="#000" stroke-width="1.2"/><path d="M1.5 26.25 L8.5 21.5 H26.5 V31.0 H8.5 Z" fill="url(#pen)" stroke="#a07020" stroke-width="0.6"/><path d="M1.5 26.25 L4.5 24.45 V28.05 Z" fill="#222"/><rect x="25.5" y="21.5" width="5" height="9.5" fill="#b01818"/></svg>
<svg class="a" style="left:98px;top:66px;" width="32" height="32" viewBox="0 0 32 32"><rect x="3" y="1.5" width="25.5" height="13.5" rx="3.5" fill="url(#gg)" stroke="#000" stroke-width="1.2"/><g transform="translate(1,16) scale(1.0)"><rect x="0" y="7.5" width="5" height="1.6" fill="#111"/><text x="7" y="15.5" font-family="Liberation Sans" font-size="20" fill="#0000e0">€</text><path d="M19 8.3H28M24.5 4.5L28.3 8.3L24.5 12.1" fill="none" stroke="#111" stroke-width="1.5"/></g></svg>
<svg class="a" style="left:194px;top:66px;" width="32" height="32" viewBox="0 0 32 32"><rect x="1" y="0.8" width="19" height="14" fill="#fff" stroke="#8a8a8a" stroke-width="0.8"/><line x1="1" y1="7.6" x2="20" y2="7.6" stroke="#8a8a8a" stroke-width="0.8"/><line x1="1" y1="10.9" x2="20" y2="10.9" stroke="#8a8a8a" stroke-width="0.8"/><line x1="1" y1="14.2" x2="20" y2="14.2" stroke="#8a8a8a" stroke-width="0.8"/><line x1="7" y1="3.8" x2="7" y2="14.8" stroke="#8a8a8a" stroke-width="0.8"/><line x1="13.5" y1="3.8" x2="13.5" y2="14.8" stroke="#8a8a8a" stroke-width="0.8"/><rect x="1" y="0.8" width="19" height="3.4" fill="#222"/><rect x="15.5" y="13" width="15" height="8.5" rx="1" fill="url(#gg)" stroke="#000" stroke-width="0.8"/><text x="3.5" y="30.5" font-family="Liberation Sans" font-size="11" fill="#10107a">2010</text></svg>
<svg class="a" style="left:278px;top:70px;" width="36" height="30" viewBox="0 0 36 30"><rect x="2" y="1" width="15" height="8.5" rx="1" fill="url(#gg)" stroke="#000" stroke-width="0.8"/><line x1="33" y1="4.5" x2="24.00" y2="4.50" stroke="#000" stroke-width="1.3"/><path d="M19.00 4.50L25.00 1.50L25.00 7.50Z" fill="#000"/><line x1="9.5" y1="28" x2="9.50" y2="17.50" stroke="#000" stroke-width="1.3"/><path d="M9.50 12.50L12.50 18.50L6.50 18.50Z" fill="#000"/><line x1="19" y1="12.5" x2="28.03" y2="21.90" stroke="#000" stroke-width="1.3"/><path d="M31.50 25.50L25.18 23.25L29.50 19.10Z" fill="#000"/></svg>
<svg class="a" style="left:374px;top:66px;" width="34" height="40" viewBox="0 0 34 40"><rect x="2" y="0.8" width="19" height="13.5" fill="#fff" stroke="#8a8a8a" stroke-width="0.8"/><line x1="2" y1="7.6" x2="21" y2="7.6" stroke="#8a8a8a" stroke-width="0.8"/><line x1="2" y1="10.9" x2="21" y2="10.9" stroke="#8a8a8a" stroke-width="0.8"/><line x1="2" y1="14.2" x2="21" y2="14.2" stroke="#8a8a8a" stroke-width="0.8"/><line x1="8" y1="3.8" x2="8" y2="14.3" stroke="#8a8a8a" stroke-width="0.8"/><line x1="14.5" y1="3.8" x2="14.5" y2="14.3" stroke="#8a8a8a" stroke-width="0.8"/><rect x="2" y="0.8" width="19" height="3.4" fill="#222"/><rect x="16.2" y="10" width="15.5" height="8.5" rx="1" fill="url(#gg)" stroke="#000" stroke-width="0.8"/><text x="1" y="26" font-family="Liberation Sans" font-size="11.5" fill="#10107a" stroke="#10107a" stroke-width="0.2" letter-spacing="-0.4">mrt</text><text x="16.5" y="31" font-family="Liberation Sans" font-size="11.5" fill="#10107a" stroke="#10107a" stroke-width="0.2" letter-spacing="-0.4">mei</text></svg>
<svg class="a" style="left:442px;top:66px;" width="34" height="40" viewBox="0 0 34 40"><rect x="2" y="0.8" width="19" height="13.5" fill="#fff" stroke="#8a8a8a" stroke-width="0.8"/><line x1="2" y1="7.6" x2="21" y2="7.6" stroke="#8a8a8a" stroke-width="0.8"/><line x1="2" y1="10.9" x2="21" y2="10.9" stroke="#8a8a8a" stroke-width="0.8"/><line x1="2" y1="14.2" x2="21" y2="14.2" stroke="#8a8a8a" stroke-width="0.8"/><line x1="8" y1="3.8" x2="8" y2="14.3" stroke="#8a8a8a" stroke-width="0.8"/><line x1="14.5" y1="3.8" x2="14.5" y2="14.3" stroke="#8a8a8a" stroke-width="0.8"/><rect x="2" y="0.8" width="19" height="3.4" fill="#222"/><rect x="16.4" y="10" width="15.5" height="8.5" rx="1" fill="url(#gg)" stroke="#000" stroke-width="0.8"/><text x="1.8" y="26" font-family="Liberation Sans" font-size="11" fill="#10107a">'09</text><text x="17.3" y="31" font-family="Liberation Sans" font-size="11" fill="#10107a">'10</text></svg>
<svg class="a" style="left:530px;top:66px;" width="34" height="32" viewBox="0 0 34 32"><rect x="1" y="0.8" width="19" height="13.5" fill="#fff" stroke="#8a8a8a" stroke-width="0.8"/><line x1="1" y1="7.6" x2="20" y2="7.6" stroke="#8a8a8a" stroke-width="0.8"/><line x1="1" y1="10.9" x2="20" y2="10.9" stroke="#8a8a8a" stroke-width="0.8"/><line x1="1" y1="14.2" x2="20" y2="14.2" stroke="#8a8a8a" stroke-width="0.8"/><line x1="7" y1="3.8" x2="7" y2="14.3" stroke="#8a8a8a" stroke-width="0.8"/><line x1="13.5" y1="3.8" x2="13.5" y2="14.3" stroke="#8a8a8a" stroke-width="0.8"/><rect x="1" y="0.8" width="19" height="3.4" fill="#222"/><rect x="16.6" y="7.6" width="14.8" height="7.4" rx="1" fill="url(#gg)" stroke="#000" stroke-width="0.8"/><rect x="2.5" y="18.2" width="14.8" height="7.9" rx="1" fill="url(#gg)" stroke="#000" stroke-width="0.8"/><rect x="15.3" y="22.4" width="15.4" height="8.2" rx="1" fill="url(#gg)" stroke="#000" stroke-width="0.8"/></svg>
<svg class="a" style="left:634px;top:66px;" width="36" height="40" viewBox="0 0 36 40"><rect x="1.6" y="0.8" width="19" height="14" fill="#fff" stroke="#8a8a8a" stroke-width="0.8"/><line x1="1.6" y1="7.6" x2="20.6" y2="7.6" stroke="#8a8a8a" stroke-width="0.8"/><line x1="1.6" y1="10.9" x2="20.6" y2="10.9" stroke="#8a8a8a" stroke-width="0.8"/><line x1="1.6" y1="14.2" x2="20.6" y2="14.2" stroke="#8a8a8a" stroke-width="0.8"/><line x1="7.6" y1="3.8" x2="7.6" y2="14.8" stroke="#8a8a8a" stroke-width="0.8"/><line x1="14.1" y1="3.8" x2="14.1" y2="14.8" stroke="#8a8a8a" stroke-width="0.8"/><rect x="1.6" y="0.8" width="19" height="3.4" fill="#222"/><rect x="16.5" y="6.4" width="15.5" height="14.8" rx="3" fill="#1a7ae8" stroke="#001060" stroke-width="1.4"/><rect x="21.5" y="9.4" width="7.5" height="8.8" fill="#9fd0ff"/><line x1="22.5" y1="11.4" x2="28.0" y2="11.4" stroke="#1a5ac8" stroke-width="0.7"/><line x1="22.5" y1="13.4" x2="28.0" y2="13.4" stroke="#1a5ac8" stroke-width="0.7"/><line x1="22.5" y1="15.4" x2="28.0" y2="15.4" stroke="#1a5ac8" stroke-width="0.7"/><line x1="22.5" y1="17.4" x2="28.0" y2="17.4" stroke="#1a5ac8" stroke-width="0.7"/><rect x="6.6" y="10.5" width="14.8" height="6.9" rx="0.5" fill="url(#gg)" stroke="#000" stroke-width="0.8"/><text x="1" y="26" font-family="Liberation Sans" font-size="11.5" fill="#10107a" stroke="#10107a" stroke-width="0.2" letter-spacing="-0.4">mrt</text><text x="16.5" y="31" font-family="Liberation Sans" font-size="11.5" fill="#10107a" stroke="#10107a" stroke-width="0.2" letter-spacing="-0.4">mei</text></svg>
<svg class="a" style="left:704px;top:66px;" width="36" height="40" viewBox="0 0 36 40"><rect x="1.6" y="0.8" width="19" height="14" fill="#fff" stroke="#8a8a8a" stroke-width="0.8"/><line x1="1.6" y1="7.6" x2="20.6" y2="7.6" stroke="#8a8a8a" stroke-width="0.8"/><line x1="1.6" y1="10.9" x2="20.6" y2="10.9" stroke="#8a8a8a" stroke-width="0.8"/><line x1="1.6" y1="14.2" x2="20.6" y2="14.2" stroke="#8a8a8a" stroke-width="0.8"/><line x1="7.6" y1="3.8" x2="7.6" y2="14.8" stroke="#8a8a8a" stroke-width="0.8"/><line x1="14.1" y1="3.8" x2="14.1" y2="14.8" stroke="#8a8a8a" stroke-width="0.8"/><rect x="1.6" y="0.8" width="19" height="3.4" fill="#222"/><rect x="16.5" y="6.4" width="15.5" height="14.8" rx="3" fill="#1a7ae8" stroke="#001060" stroke-width="1.4"/><rect x="21.5" y="9.4" width="7.5" height="8.8" fill="#9fd0ff"/><line x1="22.5" y1="11.4" x2="28.0" y2="11.4" stroke="#1a5ac8" stroke-width="0.7"/><line x1="22.5" y1="13.4" x2="28.0" y2="13.4" stroke="#1a5ac8" stroke-width="0.7"/><line x1="22.5" y1="15.4" x2="28.0" y2="15.4" stroke="#1a5ac8" stroke-width="0.7"/><line x1="22.5" y1="17.4" x2="28.0" y2="17.4" stroke="#1a5ac8" stroke-width="0.7"/><rect x="6.3" y="10.5" width="15" height="6.9" rx="0.5" fill="url(#gg)" stroke="#000" stroke-width="0.8"/><text x="1.5" y="26" font-family="Liberation Sans" font-size="11" fill="#10107a">'09</text><text x="17.0" y="31" font-family="Liberation Sans" font-size="11" fill="#10107a">'10</text></svg>
<svg class="a" style="left:805px;top:35px;" width="23" height="22" viewBox="0 0 23 22"><defs><linearGradient id="yb" x1="0" y1="0" x2="0" y2="1"><stop offset="0" stop-color="#fff8d0"/><stop offset="1" stop-color="#f8c000"/></linearGradient></defs><rect x="0.5" y="0.5" width="21" height="21" rx="3" fill="url(#yb)" stroke="#a08040" stroke-width="0.8"/><rect x="3" y="4" width="16" height="14" fill="#fffbe8" stroke="#000" stroke-width="1.2"/><text x="8" y="16" font-family="Liberation Serif" font-weight="bold" font-size="13" fill="#000">i</text></svg>
<svg class="a" style="left:829px;top:37px;" width="18" height="18" viewBox="0 0 18 18"><defs><radialGradient id="hb" cx="0.4" cy="0.35" r="0.7"><stop offset="0" stop-color="#70b0f8"/><stop offset="1" stop-color="#1050c0"/></radialGradient></defs><circle cx="9" cy="9" r="8.2" fill="url(#hb)"/><text x="4.6" y="14.5" font-family="Liberation Sans" font-weight="bold" font-size="13" fill="#fff">?</text></svg>
<svg class="a" style="left:4px;top:210px;" width="34" height="34" viewBox="0 0 34 34"><path d="M4.5 5V12M1 8.5H8" stroke="#0a6a3a" stroke-width="2.6"/><g transform="translate(2,10) scale(1.0)"><rect x="0" y="7.5" width="5" height="1.6" fill="#111"/><text x="7" y="15.5" font-family="Liberation Sans" font-size="20" fill="#0000e0">€</text><path d="M19 8.3H28M24.5 4.5L28.3 8.3L24.5 12.1" fill="none" stroke="#111" stroke-width="1.5"/></g></svg>
<svg class="a" style="left:4px;top:248px;" width="34" height="36" viewBox="0 0 34 36"><rect x="4" y="2.5" width="26" height="12.5" rx="3.5" fill="url(#gg)" stroke="#000" stroke-width="1.2"/><g transform="translate(2,17) scale(1.0)"><rect x="0" y="7.5" width="5" height="1.6" fill="#111"/><text x="7" y="15.5" font-family="Liberation Sans" font-size="20" fill="#0000e0">€</text><path d="M19 8.3H28M24.5 4.5L28.3 8.3L24.5 12.1" fill="none" stroke="#111" stroke-width="1.5"/></g></svg>
<svg class="a" style="left:4px;top:286px;" width="34" height="34" viewBox="0 0 34 34"><rect x="2" y="1.5" width="19" height="14" fill="#fff" stroke="#8a8a8a" stroke-width="0.8"/><line x1="2" y1="8.3" x2="21" y2="8.3" stroke="#8a8a8a" stroke-width="0.8"/><line x1="2" y1="11.6" x2="21" y2="11.6" stroke="#8a8a8a" stroke-width="0.8"/><line x1="2" y1="14.9" x2="21" y2="14.9" stroke="#8a8a8a" stroke-width="0.8"/><line x1="8" y1="4.5" x2="8" y2="15.5" stroke="#8a8a8a" stroke-width="0.8"/><line x1="14.5" y1="4.5" x2="14.5" y2="15.5" stroke="#8a8a8a" stroke-width="0.8"/><rect x="2" y="1.5" width="19" height="3.4" fill="#222"/><rect x="16" y="14" width="15" height="8" rx="0.8" fill="url(#gg)" stroke="#000" stroke-width="0.8"/><text x="4" y="32.5" font-family="Liberation Sans" font-size="11" fill="#10107a">2010</text></svg>
<svg class="a" style="left:4px;top:328px;" width="34" height="32" viewBox="0 0 34 32"><rect x="2" y="2" width="15" height="8" rx="0.8" fill="url(#gg)" stroke="#000" stroke-width="0.8"/><line x1="34" y1="6" x2="24.00" y2="6.00" stroke="#000" stroke-width="1.3"/><path d="M19.00 6.00L25.00 3.00L25.00 9.00Z" fill="#000"/><line x1="9.5" y1="28.5" x2="9.50" y2="18.50" stroke="#000" stroke-width="1.3"/><path d="M9.50 13.50L12.50 19.50L6.50 19.50Z" fill="#000"/><line x1="18.5" y1="13.5" x2="28.46" y2="23.46" stroke="#000" stroke-width="1.3"/><path d="M32.00 27.00L25.64 24.88L29.88 20.64Z" fill="#000"/></svg>
<svg class="a" style="left:4px;top:362px;" width="34" height="40" viewBox="0 0 34 40"><rect x="2" y="1.5" width="19" height="13.5" fill="#fff" stroke="#8a8a8a" stroke-width="0.8"/><line x1="2" y1="8.3" x2="21" y2="8.3" stroke="#8a8a8a" stroke-width="0.8"/><line x1="2" y1="11.6" x2="21" y2="11.6" stroke="#8a8a8a" stroke-width="0.8"/><line x1="2" y1="14.9" x2="21" y2="14.9" stroke="#8a8a8a" stroke-width="0.8"/><line x1="8" y1="4.5" x2="8" y2="15.0" stroke="#8a8a8a" stroke-width="0.8"/><line x1="14.5" y1="4.5" x2="14.5" y2="15.0" stroke="#8a8a8a" stroke-width="0.8"/><rect x="2" y="1.5" width="19" height="3.4" fill="#222"/><rect x="16.5" y="11.5" width="15.5" height="7.5" rx="0.8" fill="url(#gg)" stroke="#000" stroke-width="0.8"/><text x="1" y="26.5" font-family="Liberation Sans" font-size="11.5" fill="#10107a" stroke="#10107a" stroke-width="0.2" letter-spacing="-0.4">mrt</text><text x="16.5" y="31.5" font-family="Liberation Sans" font-size="11.5" fill="#10107a" stroke="#10107a" stroke-width="0.2" letter-spacing="-0.4">mei</text></svg>
<svg class="a" style="left:4px;top:400px;" width="34" height="40" viewBox="0 0 34 40"><rect x="2" y="1.5" width="19" height="13.5" fill="#fff" stroke="#8a8a8a" stroke-width="0.8"/><line x1="2" y1="8.3" x2="21" y2="8.3" stroke="#8a8a8a" stroke-width="0.8"/><line x1="2" y1="11.6" x2="21" y2="11.6" stroke="#8a8a8a" stroke-width="0.8"/><line x1="2" y1="14.9" x2="21" y2="14.9" stroke="#8a8a8a" stroke-width="0.8"/><line x1="8" y1="4.5" x2="8" y2="15.0" stroke="#8a8a8a" stroke-width="0.8"/><line x1="14.5" y1="4.5" x2="14.5" y2="15.0" stroke="#8a8a8a" stroke-width="0.8"/><rect x="2" y="1.5" width="19" height="3.4" fill="#222"/><rect x="16.5" y="11.5" width="15.5" height="7.5" rx="0.8" fill="url(#gg)" stroke="#000" stroke-width="0.8"/><text x="1" y="27" font-family="Liberation Sans" font-size="11" fill="#10107a">'09</text><text x="16.5" y="32" font-family="Liberation Sans" font-size="11" fill="#10107a">'10</text></svg>
<svg class="a" style="left:4px;top:438px;" width="34" height="32" viewBox="0 0 34 32"><rect x="2.5" y="2.5" width="29" height="16" fill="#00ff00" stroke="#000" stroke-width="1.2"/><rect x="20.5" y="3" width="10.5" height="15" fill="#ff0000"/><line x1="20.5" y1="2.5" x2="20.5" y2="18.5" stroke="#000" stroke-width="0.8"/><text x="3.5" y="16.5" font-family="Liberation Sans" font-weight="bold" font-size="15" fill="#000">%</text><path d="M2.5 25.5 L9.5 21 H27.5 V30 H9.5 Z" fill="url(#pen)" stroke="#a07020" stroke-width="0.6"/><path d="M2.5 25.5 L5.5 23.7 V27.3 Z" fill="#222"/><rect x="26.5" y="21" width="5" height="9" fill="#b01818"/></svg>
<svg class="a" style="left:4px;top:474px;" width="34" height="36" viewBox="0 0 34 36"><rect x="15" y="4" width="4" height="28" fill="#505050"/><rect x="3" y="16" width="28" height="4" fill="#505050"/><path d="M17 0.5L22.5 6.5H11.5Z M17 35.5L22.5 29.5H11.5Z M0.5 18L6.5 12.5V23.5Z M33.5 18L27.5 12.5V23.5Z" fill="#505050"/><rect x="4.5" y="11.5" width="25" height="13" rx="4.5" fill="#00c000" stroke="#000" stroke-width="1.2"/><rect x="8" y="15.5" width="18" height="5" fill="#006000"/><path d="M9 18H25" stroke="#00a000" stroke-width="1"/></svg>
<svg class="a" style="left:4px;top:514px;" width="34" height="34" viewBox="0 0 34 34"><rect x="4" y="3.5" width="26" height="15.5" rx="3.5" fill="url(#gg)" stroke="#000" stroke-width="1.2"/><path d="M2.5 27.0 L9.5 22.5 H27.5 V31.5 H9.5 Z" fill="url(#pen)" stroke="#a07020" stroke-width="0.6"/><path d="M2.5 27.0 L5.5 25.2 V28.8 Z" fill="#222"/><rect x="26.5" y="22.5" width="5" height="9" fill="#b01818"/></svg>
<svg class="a" style="left:4px;top:556px;" width="34" height="24" viewBox="0 0 34 24"><rect x="4" y="3" width="28" height="17" fill="#00a000" stroke="#000" stroke-width="1.2"/><path d="M3 2L33 21M33 2L3 21" stroke="#e02020" stroke-width="1.8"/></svg>
<svg class="a" style="left:4px;top:590px;" width="34" height="34" viewBox="0 0 34 34"><rect x="2.5" y="2.5" width="14" height="7" fill="#0a8a0a" stroke="#333" stroke-width="0.6"/><rect x="15" y="13.5" width="14.5" height="7" fill="#0a8a0a" stroke="#333" stroke-width="0.6"/><rect x="2.5" y="24.5" width="14" height="7" fill="#0a8a0a" stroke="#333" stroke-width="0.6"/><line x1="13" y1="17" x2="7.50" y2="17.00" stroke="#000" stroke-width="1.1"/><path d="M4.50 17.00L8.50 14.80L8.50 19.20Z" fill="#000"/></svg>
<svg class="a" style="left:0px;top:625px;" width="40" height="120" viewBox="0 0 40 120"><defs><radialGradient id="mg" cx="0.4" cy="0.4" r="0.7"><stop offset="0" stop-color="#e8eef4"/><stop offset="1" stop-color="#a8b8c8"/></radialGradient></defs><path d="M7 6V33H34" fill="none" stroke="#10107a" stroke-width="2"/><path d="M7 20L12 26L18 22" fill="none" stroke="#e02020" stroke-width="2.5"/><path d="M7 28L12 31L18 29" fill="none" stroke="#208020" stroke-width="2.5"/><path d="M21 25L14 32" stroke="#404040" stroke-width="3"/><circle cx="26.5" cy="19.5" r="8" fill="url(#mg)" stroke="#8898a8" stroke-width="1.5"/><path d="M22 16L31 23" stroke="#e8a0a0" stroke-width="1.5"/><path d="M22 24L31 16" stroke="#a0c8a0" stroke-width="1.5"/><text x="9" y="55" font-family="Liberation Sans" font-size="14" fill="#000">€</text><path d="M7 44V71H34" fill="none" stroke="#10107a" stroke-width="2"/><path d="M7 53L13 59L21 53L34 63" fill="none" stroke="#e02020" stroke-width="2.5"/><path d="M7 64L13 67L22 62L34 52" fill="none" stroke="#208020" stroke-width="2.5"/><text x="4.5" y="92" font-family="Liberation Sans" font-size="13.5" fill="#10107a" letter-spacing="-0.3">ax+b</text><text x="27" y="108" font-family="Liberation Sans" font-size="11" fill="#4a4aa0">?</text><path d="M16 103L7 111" stroke="#404040" stroke-width="3.2" stroke-linecap="round"/><circle cx="21.5" cy="97.5" r="7.8" fill="url(#mg)" fill-opacity="0.9" stroke="#8898a8" stroke-width="1.5"/><path d="M18 100H25" stroke="#9090d0" stroke-width="1"/></svg>
<svg class="a" style="left:14px;top:745px;" width="22" height="20" viewBox="0 0 22 20"><line x1="3" y1="17" x2="14.32" y2="6.71" stroke="#000" stroke-width="2.2"/><path d="M19.50 2.00L16.27 10.34L10.89 4.42Z" fill="#000"/></svg>
<svg class="a" style="left:60px;top:212px;" width="50" height="55" viewBox="0 0 50 55"><path d="M28 42 L18 45 M28 42 L22 50 M28 42 L35 50 M28 42 L38 45" stroke="#3a3a3a" stroke-width="2.4" stroke-linecap="round"/><rect x="26.8" y="33" width="2.6" height="10" fill="#a0a0a0"/><ellipse cx="19" cy="20" rx="8.3" ry="13.5" transform="rotate(-20 19 20)" fill="url(#orng)"/><ellipse cx="30" cy="28.5" rx="11.3" ry="6.5" transform="rotate(-18 30 28.5)" fill="url(#orng)"/><path d="M12 11 L19.5 26.5 H30" fill="none" stroke="#8a9098" stroke-width="1.5"/><path d="M28 19.5 H38" stroke="#606060" stroke-width="1.8"/><rect x="22" y="26" width="2" height="9" fill="#8a9098"/></svg>
<svg class="a" style="left:60px;top:348px;" width="50" height="50" viewBox="0 0 50 50"><defs><linearGradient id="fdoor" x1="0" y1="0" x2="0" y2="1"><stop offset="0" stop-color="#000"/><stop offset="1" stop-color="#a0a0a0"/></linearGradient><linearGradient id="frf" x1="0" y1="0" x2="1" y2="1"><stop offset="0" stop-color="#f8e4dc"/><stop offset="1" stop-color="#e8a898"/></linearGradient><linearGradient id="frr" x1="0" y1="0" x2="1" y2="1"><stop offset="0" stop-color="#a01818"/><stop offset="1" stop-color="#b86060"/></linearGradient></defs><path d="M2.55 7.35L9.6 9.6L9.9 5.4L17.2 8L17.2 4.15L23.6 6.4L23.3 2.55L42.1 8.3L48.5 18.2V38.3L21.7 49.2L2.55 39Z" fill="url(#frr)" stroke="#801010" stroke-width="1"/><path d="M2.55 7.35L21.7 15.3V49.2L2.55 39Z" fill="url(#fac)"/><path d="M9.9 5.4L17.2 8L28.1 24.6L19 12Z M17.2 4.15L23.6 6.4L35.4 22L26 10Z M23.3 2.55L42.1 8.3L42.1 19.5L32 9Z" fill="url(#frf)"/><path d="M8 25.5L16.6 29V44L8 40.2Z" fill="url(#fdoor)"/><path d="M24.3 30.7L45 24V27.1L24.3 34.5Z" fill="#c8dcf0"/></svg>
<div class="a" style="left:65px;top:505.5px;font-size:31px;line-height:32px;color:#000;transform:scaleX(0.93);transform-origin:0 0;font-family:'Liberation Sans',sans-serif">%</div>
<svg class="a" style="left:60px;top:600px;" width="40" height="40" viewBox="0 0 40 40"><text x="1.5" y="32" font-family="Liberation Sans" font-style="italic" font-size="36" fill="url(#eub)" stroke="#2858b8" stroke-width="0.8" transform="scale(1.45,1)">€</text></svg>
<svg class="a" style="left:328px;top:252px;" width="40" height="40" viewBox="0 0 40 40"><path d="M13 8.5V17.5A6.75 2.5 0 0 0 26.5 17.5V8.5Z" fill="url(#silv)" stroke="#505050" stroke-width="0.6"/><line x1="13" y1="10.0" x2="26.5" y2="10.0" stroke="#b8b8b8" stroke-width="0.5"/><line x1="13" y1="11.7" x2="26.5" y2="11.7" stroke="#b8b8b8" stroke-width="0.5"/><line x1="13" y1="13.4" x2="26.5" y2="13.4" stroke="#b8b8b8" stroke-width="0.5"/><line x1="13" y1="15.1" x2="26.5" y2="15.1" stroke="#b8b8b8" stroke-width="0.5"/><ellipse cx="19.75" cy="8.5" rx="6.75" ry="2.5" fill="#f4f4f4" stroke="#707070" stroke-width="0.5"/><path d="M5 23.5V31.5A7.0 2.5 0 0 0 19 31.5V23.5Z" fill="url(#silv)" stroke="#505050" stroke-width="0.6"/><line x1="5" y1="25.0" x2="19" y2="25.0" stroke="#b8b8b8" stroke-width="0.5"/><line x1="5" y1="26.7" x2="19" y2="26.7" stroke="#b8b8b8" stroke-width="0.5"/><line x1="5" y1="28.4" x2="19" y2="28.4" stroke="#b8b8b8" stroke-width="0.5"/><line x1="5" y1="30.1" x2="19" y2="30.1" stroke="#b8b8b8" stroke-width="0.5"/><ellipse cx="12.0" cy="23.5" rx="7.0" ry="2.5" fill="#f4f4f4" stroke="#707070" stroke-width="0.5"/><path d="M19 19.0V33.5A7.75 2.5 0 0 0 34.5 33.5V19.0Z" fill="url(#silv)" stroke="#505050" stroke-width="0.6"/><line x1="19" y1="20.5" x2="34.5" y2="20.5" stroke="#b8b8b8" stroke-width="0.5"/><line x1="19" y1="22.2" x2="34.5" y2="22.2" stroke="#b8b8b8" stroke-width="0.5"/><line x1="19" y1="23.9" x2="34.5" y2="23.9" stroke="#b8b8b8" stroke-width="0.5"/><line x1="19" y1="25.6" x2="34.5" y2="25.6" stroke="#b8b8b8" stroke-width="0.5"/><line x1="19" y1="27.3" x2="34.5" y2="27.3" stroke="#b8b8b8" stroke-width="0.5"/><line x1="19" y1="29.0" x2="34.5" y2="29.0" stroke="#b8b8b8" stroke-width="0.5"/><line x1="19" y1="30.7" x2="34.5" y2="30.7" stroke="#b8b8b8" stroke-width="0.5"/><ellipse cx="26.75" cy="19.0" rx="7.75" ry="2.5" fill="#f4f4f4" stroke="#707070" stroke-width="0.5"/></svg>
<svg class="a" style="left:328px;top:337px;" width="40" height="40" viewBox="0 0 40 40"><path d="M13 8.5V17.5A6.75 2.5 0 0 0 26.5 17.5V8.5Z" fill="url(#silv)" stroke="#505050" stroke-width="0.6"/><line x1="13" y1="10.0" x2="26.5" y2="10.0" stroke="#b8b8b8" stroke-width="0.5"/><line x1="13" y1="11.7" x2="26.5" y2="11.7" stroke="#b8b8b8" stroke-width="0.5"/><line x1="13" y1="13.4" x2="26.5" y2="13.4" stroke="#b8b8b8" stroke-width="0.5"/><line x1="13" y1="15.1" x2="26.5" y2="15.1" stroke="#b8b8b8" stroke-width="0.5"/><ellipse cx="19.75" cy="8.5" rx="6.75" ry="2.5" fill="#f4f4f4" stroke="#707070" stroke-width="0.5"/><path d="M5 23.5V31.5A7.0 2.5 0 0 0 19 31.5V23.5Z" fill="url(#silv)" stroke="#505050" stroke-width="0.6"/><line x1="5" y1="25.0" x2="19" y2="25.0" stroke="#b8b8b8" stroke-width="0.5"/><line x1="5" y1="26.7" x2="19" y2="26.7" stroke="#b8b8b8" stroke-width="0.5"/><line x1="5" y1="28.4" x2="19" y2="28.4" stroke="#b8b8b8" stroke-width="0.5"/><line x1="5" y1="30.1" x2="19" y2="30.1" stroke="#b8b8b8" stroke-width="0.5"/><ellipse cx="12.0" cy="23.5" rx="7.0" ry="2.5" fill="#f4f4f4" stroke="#707070" stroke-width="0.5"/><path d="M19 19.0V33.5A7.75 2.5 0 0 0 34.5 33.5V19.0Z" fill="url(#silv)" stroke="#505050" stroke-width="0.6"/><line x1="19" y1="20.5" x2="34.5" y2="20.5" stroke="#b8b8b8" stroke-width="0.5"/><line x1="19" y1="22.2" x2="34.5" y2="22.2" stroke="#b8b8b8" stroke-width="0.5"/><line x1="19" y1="23.9" x2="34.5" y2="23.9" stroke="#b8b8b8" stroke-width="0.5"/><line x1="19" y1="25.6" x2="34.5" y2="25.6" stroke="#b8b8b8" stroke-width="0.5"/><line x1="19" y1="27.3" x2="34.5" y2="27.3" stroke="#b8b8b8" stroke-width="0.5"/><line x1="19" y1="29.0" x2="34.5" y2="29.0" stroke="#b8b8b8" stroke-width="0.5"/><line x1="19" y1="30.7" x2="34.5" y2="30.7" stroke="#b8b8b8" stroke-width="0.5"/><ellipse cx="26.75" cy="19.0" rx="7.75" ry="2.5" fill="#f4f4f4" stroke="#707070" stroke-width="0.5"/></svg>
<svg class="a" style="left:328px;top:390px;" width="40" height="40" viewBox="0 0 40 40"><ellipse cx="19" cy="21" rx="14.5" ry="13" fill="url(#pink)"/><path d="M25 8 L32 6 L32 14Z" fill="#f4a8d8"/><ellipse cx="31.5" cy="25" rx="3.5" ry="4" fill="#f8d0e8" stroke="#d070a8" stroke-width="0.6"/><circle cx="28" cy="18" r="1" fill="#000"/><circle cx="30.5" cy="17" r="0.9" fill="#000"/><path d="M14 12 Q18 14 17 21" fill="none" stroke="#e070b0" stroke-width="1.5"/></svg>
<svg class="a" style="left:328px;top:456px;" width="40" height="40" viewBox="0 0 40 40"><rect x="7.5" y="6" width="27" height="25" fill="#f0f0f8"/><path d="M8 29.5 L14.5 20 L18.5 23 L25 17 L28.5 19 L34 16 V30 H8Z" fill="#f09020"/><path d="M8 22 L14.5 16 L18.5 21 L25 13 L28 17 L32 11" fill="none" stroke="#6aa838" stroke-width="3"/><path d="M28 10.5 L33.5 10 L33 16Z" fill="#6aa838"/><path d="M14.5 6V33M21.5 6V33M28.5 6V33" stroke="#303040" stroke-width="0.6" opacity="0.6"/><path d="M7 5 V31.5 H35" fill="none" stroke="#202030" stroke-width="1.2"/></svg>
<svg class="a" style="left:332px;top:522px;" width="48" height="56" viewBox="0 0 48 56"><path d="M4.5 10.5 L30 9.5 L30 29 L8.5 35.5 Z" fill="#a05428"/><path d="M6 6 L31 4.5 L36 14 L8 16Z" fill="#d8eef8"/><path d="M7 11 L29 9 L29.5 16.5 L7.5 19.5Z" fill="#b8e818"/><path d="M8 12 L12 11.6 V15 L8 15.4Z" fill="#a0d0f0"/><path d="M8 19.5 L29 16 V19 L8 22.5Z" fill="#78d0f8"/><path d="M8 22.5 L30 19 V29 L8.5 35.5Z" fill="#b06430"/><path d="M8 22.5 L30 19 V21 L8 24.5Z" fill="#8a4418"/><path d="M30 9.5 L39 15 L41 40 L30 29 Z" fill="#8a4820"/><path d="M31 18 L39 26 V28 L31 20Z" fill="#60c0f0"/><circle cx="33.5" cy="30" r="1.8" fill="#f0d020"/><g fill="#f0c040" stroke="#d89020" stroke-width="0.5"><ellipse cx="15" cy="40" rx="3.8" ry="3"/><ellipse cx="23" cy="37" rx="3.8" ry="3"/><ellipse cx="22.5" cy="44" rx="3.8" ry="3"/><ellipse cx="33.5" cy="42" rx="3.5" ry="2.6"/><ellipse cx="30.5" cy="47.5" rx="3.8" ry="2.6"/></g></svg>
<svg class="a" style="left:328px;top:598px;" width="40" height="40" viewBox="0 0 40 40"><rect x="5.3" y="6.5" width="25.2" height="16" rx="1.5" fill="#606060"/><rect x="5.3" y="9" width="25.2" height="3.7" fill="#111"/><rect x="7" y="14" width="15" height="1.8" fill="#ddd"/><rect x="9.5" y="15.5" width="25" height="15.5" rx="1.5" fill="#d0d0d0" stroke="#909090" stroke-width="0.5"/><path d="M24 15.5 L34.5 27 V31 L30 31 L19 15.5Z" fill="#e8e8e8"/><rect x="11" y="22" width="6" height="3.5" rx="0.8" fill="#e8e020"/><rect x="27" y="17.5" width="6" height="1" fill="#2050a0"/><rect x="27" y="20" width="6" height="1" fill="#e09020"/><path d="M11 28H33" stroke="#999" stroke-width="0.8" stroke-dasharray="3 2"/></svg>
<svg class="a" style="left:328px;top:652px;" width="40" height="40" viewBox="0 0 40 40"><rect x="16.5" y="6" width="10" height="18" fill="url(#gold)"/><line x1="16.5" y1="7.0" x2="26.5" y2="7.0" stroke="#fff6d8" stroke-width="0.5" opacity="0.8"/><line x1="16.5" y1="8.6" x2="26.5" y2="8.6" stroke="#fff6d8" stroke-width="0.5" opacity="0.8"/><line x1="16.5" y1="10.2" x2="26.5" y2="10.2" stroke="#fff6d8" stroke-width="0.5" opacity="0.8"/><line x1="16.5" y1="11.8" x2="26.5" y2="11.8" stroke="#fff6d8" stroke-width="0.5" opacity="0.8"/><line x1="16.5" y1="13.4" x2="26.5" y2="13.4" stroke="#fff6d8" stroke-width="0.5" opacity="0.8"/><line x1="16.5" y1="15.0" x2="26.5" y2="15.0" stroke="#fff6d8" stroke-width="0.5" opacity="0.8"/><line x1="16.5" y1="16.6" x2="26.5" y2="16.6" stroke="#fff6d8" stroke-width="0.5" opacity="0.8"/><line x1="16.5" y1="18.2" x2="26.5" y2="18.2" stroke="#fff6d8" stroke-width="0.5" opacity="0.8"/><line x1="16.5" y1="19.8" x2="26.5" y2="19.8" stroke="#fff6d8" stroke-width="0.5" opacity="0.8"/><line x1="16.5" y1="21.4" x2="26.5" y2="21.4" stroke="#fff6d8" stroke-width="0.5" opacity="0.8"/><line x1="16.5" y1="23.0" x2="26.5" y2="23.0" stroke="#fff6d8" stroke-width="0.5" opacity="0.8"/><ellipse cx="21.5" cy="24" rx="5.0" ry="2" fill="#d8a858"/><ellipse cx="21.5" cy="6" rx="5.0" ry="2" fill="#f8e0a8"/><rect x="8" y="12.5" width="10.5" height="16" fill="url(#gold)"/><line x1="8" y1="13.5" x2="18.5" y2="13.5" stroke="#fff6d8" stroke-width="0.5" opacity="0.8"/><line x1="8" y1="15.1" x2="18.5" y2="15.1" stroke="#fff6d8" stroke-width="0.5" opacity="0.8"/><line x1="8" y1="16.7" x2="18.5" y2="16.7" stroke="#fff6d8" stroke-width="0.5" opacity="0.8"/><line x1="8" y1="18.3" x2="18.5" y2="18.3" stroke="#fff6d8" stroke-width="0.5" opacity="0.8"/><line x1="8" y1="19.9" x2="18.5" y2="19.9" stroke="#fff6d8" stroke-width="0.5" opacity="0.8"/><line x1="8" y1="21.5" x2="18.5" y2="21.5" stroke="#fff6d8" stroke-width="0.5" opacity="0.8"/><line x1="8" y1="23.1" x2="18.5" y2="23.1" stroke="#fff6d8" stroke-width="0.5" opacity="0.8"/><line x1="8" y1="24.7" x2="18.5" y2="24.7" stroke="#fff6d8" stroke-width="0.5" opacity="0.8"/><line x1="8" y1="26.3" x2="18.5" y2="26.3" stroke="#fff6d8" stroke-width="0.5" opacity="0.8"/><line x1="8" y1="27.9" x2="18.5" y2="27.9" stroke="#fff6d8" stroke-width="0.5" opacity="0.8"/><ellipse cx="13.25" cy="28.5" rx="5.25" ry="2" fill="#d8a858"/><ellipse cx="13.25" cy="12.5" rx="5.25" ry="2" fill="#f8e0a8"/><rect x="22.5" y="21" width="10.5" height="8" fill="url(#gold)"/><line x1="22.5" y1="22.0" x2="33.0" y2="22.0" stroke="#fff6d8" stroke-width="0.5" opacity="0.8"/><line x1="22.5" y1="23.6" x2="33.0" y2="23.6" stroke="#fff6d8" stroke-width="0.5" opacity="0.8"/><line x1="22.5" y1="25.2" x2="33.0" y2="25.2" stroke="#fff6d8" stroke-width="0.5" opacity="0.8"/><line x1="22.5" y1="26.8" x2="33.0" y2="26.8" stroke="#fff6d8" stroke-width="0.5" opacity="0.8"/><line x1="22.5" y1="28.4" x2="33.0" y2="28.4" stroke="#fff6d8" stroke-width="0.5" opacity="0.8"/><ellipse cx="27.75" cy="29" rx="5.25" ry="2" fill="#d8a858"/><ellipse cx="27.75" cy="21" rx="5.25" ry="2" fill="#f8e0a8"/></svg>
<svg class="a" style="left:545px;top:218px;" width="55" height="40" viewBox="0 0 55 40"><path d="M18 35 L41 28.5 L50 30 L46 33.5 L27 36.5Z" fill="#5a9a30"/><path d="M33 30 L38 29 L46 34 L40 35Z" fill="#404040"/><path d="M18 10 L37.5 7 V18 L18 18Z" fill="#e8dcb8"/><path d="M17.5 10 L37.5 7.5 L38 9 L18.5 11.5Z" fill="#c06838"/><path d="M6 19.5 L19.5 23.5 V32 L6 26.5Z" fill="#d8cca0"/><path d="M19.5 23.5 L33.5 14 L41.5 19 V28.5 L19.5 32Z" fill="#e8e0c0"/><path d="M5 19 L12.5 12.5 L33.5 12 L43.5 19.5 L41.5 20 L33.5 14.5 L19.5 23.5Z" fill="#c8703a"/><rect x="29.5" y="17.5" width="5" height="11.5" rx="2" fill="#8a5028"/><path d="M9 21 L13.5 22.5 V27.5 L9 25.5Z" fill="#a0c8e8"/></svg>
<svg class="a" style="left:543px;top:412px;" width="55" height="40" viewBox="0 0 55 40"><defs><linearGradient id="carb" x1="0" y1="0" x2="1" y2="0.3"><stop offset="0" stop-color="#1a3a98"/><stop offset="0.6" stop-color="#2858c0"/><stop offset="1" stop-color="#1c3c90"/></linearGradient><linearGradient id="carw" x1="0" y1="0" x2="1" y2="1"><stop offset="0" stop-color="#e8f0f8"/><stop offset="0.5" stop-color="#5a88c8"/><stop offset="1" stop-color="#20408a"/></linearGradient></defs><path d="M7 16 Q9 8 13 7 Q25 5.5 36 7 L40 15 Q50 16 51.5 20 L52 29 Q48 34 42 34.5 L22 35.5 Q10 34 5 30 Q3 24 7 16Z" fill="url(#carb)"/><path d="M11 8 Q24 5 35.5 6.5" fill="none" stroke="#d0d8e8" stroke-width="1.2"/><path d="M9.5 16 L11.5 9 L17 8.5 L17.5 15.5Z" fill="#c8d8f0"/><path d="M19 8.5 L36 7.5 L39.5 15 L20 16Z" fill="url(#carw)"/><circle cx="29.5" cy="20.5" r="2.8" fill="#e8e8e8" stroke="#707070" stroke-width="0.5"/><circle cx="49.5" cy="19.5" r="2.3" fill="#e8e8e8"/><path d="M32 22.5 L49 21.5 V26 L32 27Z" fill="#303848"/><g fill="#f0f0f0"><circle cx="34.5" cy="24.5" r="1.6"/><circle cx="39.5" cy="24" r="1.6"/><circle cx="43.5" cy="24" r="1.6"/><circle cx="47.5" cy="23.5" r="1.4"/></g><rect x="26" y="27.5" width="26" height="2" fill="#f0f0f0"/><rect x="36" y="29.5" width="10" height="2.5" fill="#fafafa"/><ellipse cx="6.5" cy="26.5" rx="3" ry="4.5" fill="#202020"/><ellipse cx="6.5" cy="26.5" rx="1.4" ry="2.5" fill="#c0c0c0"/><ellipse cx="19.5" cy="31" rx="3.5" ry="5" fill="#202020"/><ellipse cx="19.5" cy="31" rx="1.8" ry="3" fill="#d8d8d8"/></svg>
<svg class="a" style="left:545px;top:630px;" width="45" height="55" viewBox="0 0 45 55"><path d="M14 6 L12.5 17 M38.5 13 L38.5 20" stroke="#b8c0c8" stroke-width="0.7"/><path d="M14.4 5.3 L39 12.6" stroke="#f0b838" stroke-width="2.2" stroke-linecap="round"/><path d="M5.6 30.9 L28 39 L26.7 48.5 L9.1 43.5Z" fill="#f4b840"/><path d="M28 39 L39 19.3 L35.8 40.7 L26.7 48.5Z" fill="#e09828"/><path d="M5.6 30.9 L16.2 14.7 L39 19.3 L28 39Z" fill="#ffd870"/><path d="M9 30 L17 17.5 L36 21.5 L27.5 36.5Z" fill="#fae8b8"/><path d="M9 30 L17 17.5 L21 18.5 L14 32Z" fill="#f0c060"/><path d="M23 18.5 L31 20" stroke="#8a7040" stroke-width="1.4"/><path d="M12 38 L22 41" stroke="#c08020" stroke-width="1.2"/></svg>
<svg class="a" style="left:545px;top:700px;" width="40" height="40" viewBox="0 0 40 40"><path d="M7.5 5.5 L31.5 5.5 L28.5 33 Q19.5 36 10.5 33Z" fill="#d8e0ec" stroke="#a8b4c4" stroke-width="0.6"/><ellipse cx="19.5" cy="5.5" rx="12" ry="2.3" fill="#e8f0f8" stroke="#806040" stroke-width="0.7"/><path d="M10 9 L16 30" stroke="#f8fbff" stroke-width="3" opacity="0.8"/><circle cx="23.5" cy="21" r="5.5" fill="none" stroke="#2060d8" stroke-width="2.8" stroke-dasharray="6 2.6"/></svg>
<div id="frame"></div>
</body></html>
